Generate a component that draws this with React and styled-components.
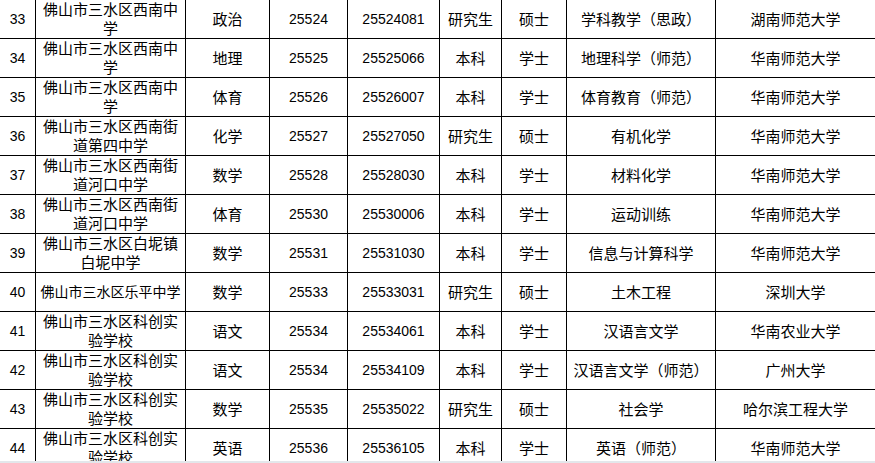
import React from "react";
import styled, { createGlobalStyle } from "styled-components";

const GlobalStyle = createGlobalStyle`
  html, body {
    margin: 0;
    padding: 0;
    background: #ffffff;
  }
  body {
    font-family: "Liberation Sans", "Noto Sans CJK SC", sans-serif;
    color: #000000;
  }
`;

const Page = styled.div`
  display: flex;
  flex-direction: column;
  width: 875px;
  height: 463px;
  overflow: hidden;
`;

const Sheet = styled.div`
  flex: 1;
  overflow: hidden;
  display: grid;
  grid-template-columns: 36px 150px 84px 78px 92px 62px 65px 149px 160px;
  grid-auto-rows: 39px;
  align-content: start;
`;

const Cell = styled.div`
  box-sizing: border-box;
  border-right: 1px solid #000;
  border-bottom: 1px solid #000;
  display: flex;
  flex-direction: column;
  align-items: center;
  justify-content: center;
  text-align: center;
  white-space: nowrap;
  overflow: hidden;
  font-size: ${({ $num, $tight }) => ($num ? "14px" : $tight ? "14px" : "15px")};
  line-height: 19px;
`;

const Strip = styled.div`
  height: 2px;
  flex: none;
  background: #e3e7eb;
`;

const rows = [
  ["33", ["佛山市三水区西南中", "学"], "政治", "25524", "25524081", "研究生", "硕士", "学科教学（思政）", "湖南师范大学"],
  ["34", ["佛山市三水区西南中", "学"], "地理", "25525", "25525066", "本科", "学士", "地理科学（师范）", "华南师范大学"],
  ["35", ["佛山市三水区西南中", "学"], "体育", "25526", "25526007", "本科", "学士", "体育教育（师范）", "华南师范大学"],
  ["36", ["佛山市三水区西南街", "道第四中学"], "化学", "25527", "25527050", "研究生", "硕士", "有机化学", "华南师范大学"],
  ["37", ["佛山市三水区西南街", "道河口中学"], "数学", "25528", "25528030", "本科", "学士", "材料化学", "华南师范大学"],
  ["38", ["佛山市三水区西南街", "道河口中学"], "体育", "25530", "25530006", "本科", "学士", "运动训练", "华南师范大学"],
  ["39", ["佛山市三水区白坭镇", "白坭中学"], "数学", "25531", "25531030", "本科", "学士", "信息与计算科学", "华南师范大学"],
  ["40", ["佛山市三水区乐平中学"], "数学", "25533", "25533031", "研究生", "硕士", "土木工程", "深圳大学"],
  ["41", ["佛山市三水区科创实", "验学校"], "语文", "25534", "25534061", "本科", "学士", "汉语言文学", "华南农业大学"],
  ["42", ["佛山市三水区科创实", "验学校"], "语文", "25534", "25534109", "本科", "学士", "汉语言文学（师范）", "广州大学"],
  ["43", ["佛山市三水区科创实", "验学校"], "数学", "25535", "25535022", "研究生", "硕士", "社会学", "哈尔滨工程大学"],
  ["44", ["佛山市三水区科创实", "验学校"], "英语", "25536", "25536105", "本科", "学士", "英语（师范）", "华南师范大学"],
];

const numericCols = [0, 3, 4];

export default function App() {
  return (
    <>
      <GlobalStyle />
      <Page>
        <Sheet>
          {rows.map((r) =>
            r.map((v, i) => (
              <Cell
                key={r[0] + "-" + i}
                $num={numericCols.includes(i)}
                $tight={Array.isArray(v) && v.length === 1}
              >
                {Array.isArray(v) ? v.map((line) => <span key={line}>{line}</span>) : v}
              </Cell>
            ))
          )}
        </Sheet>
        <Strip />
      </Page>
    </>
  );
}
